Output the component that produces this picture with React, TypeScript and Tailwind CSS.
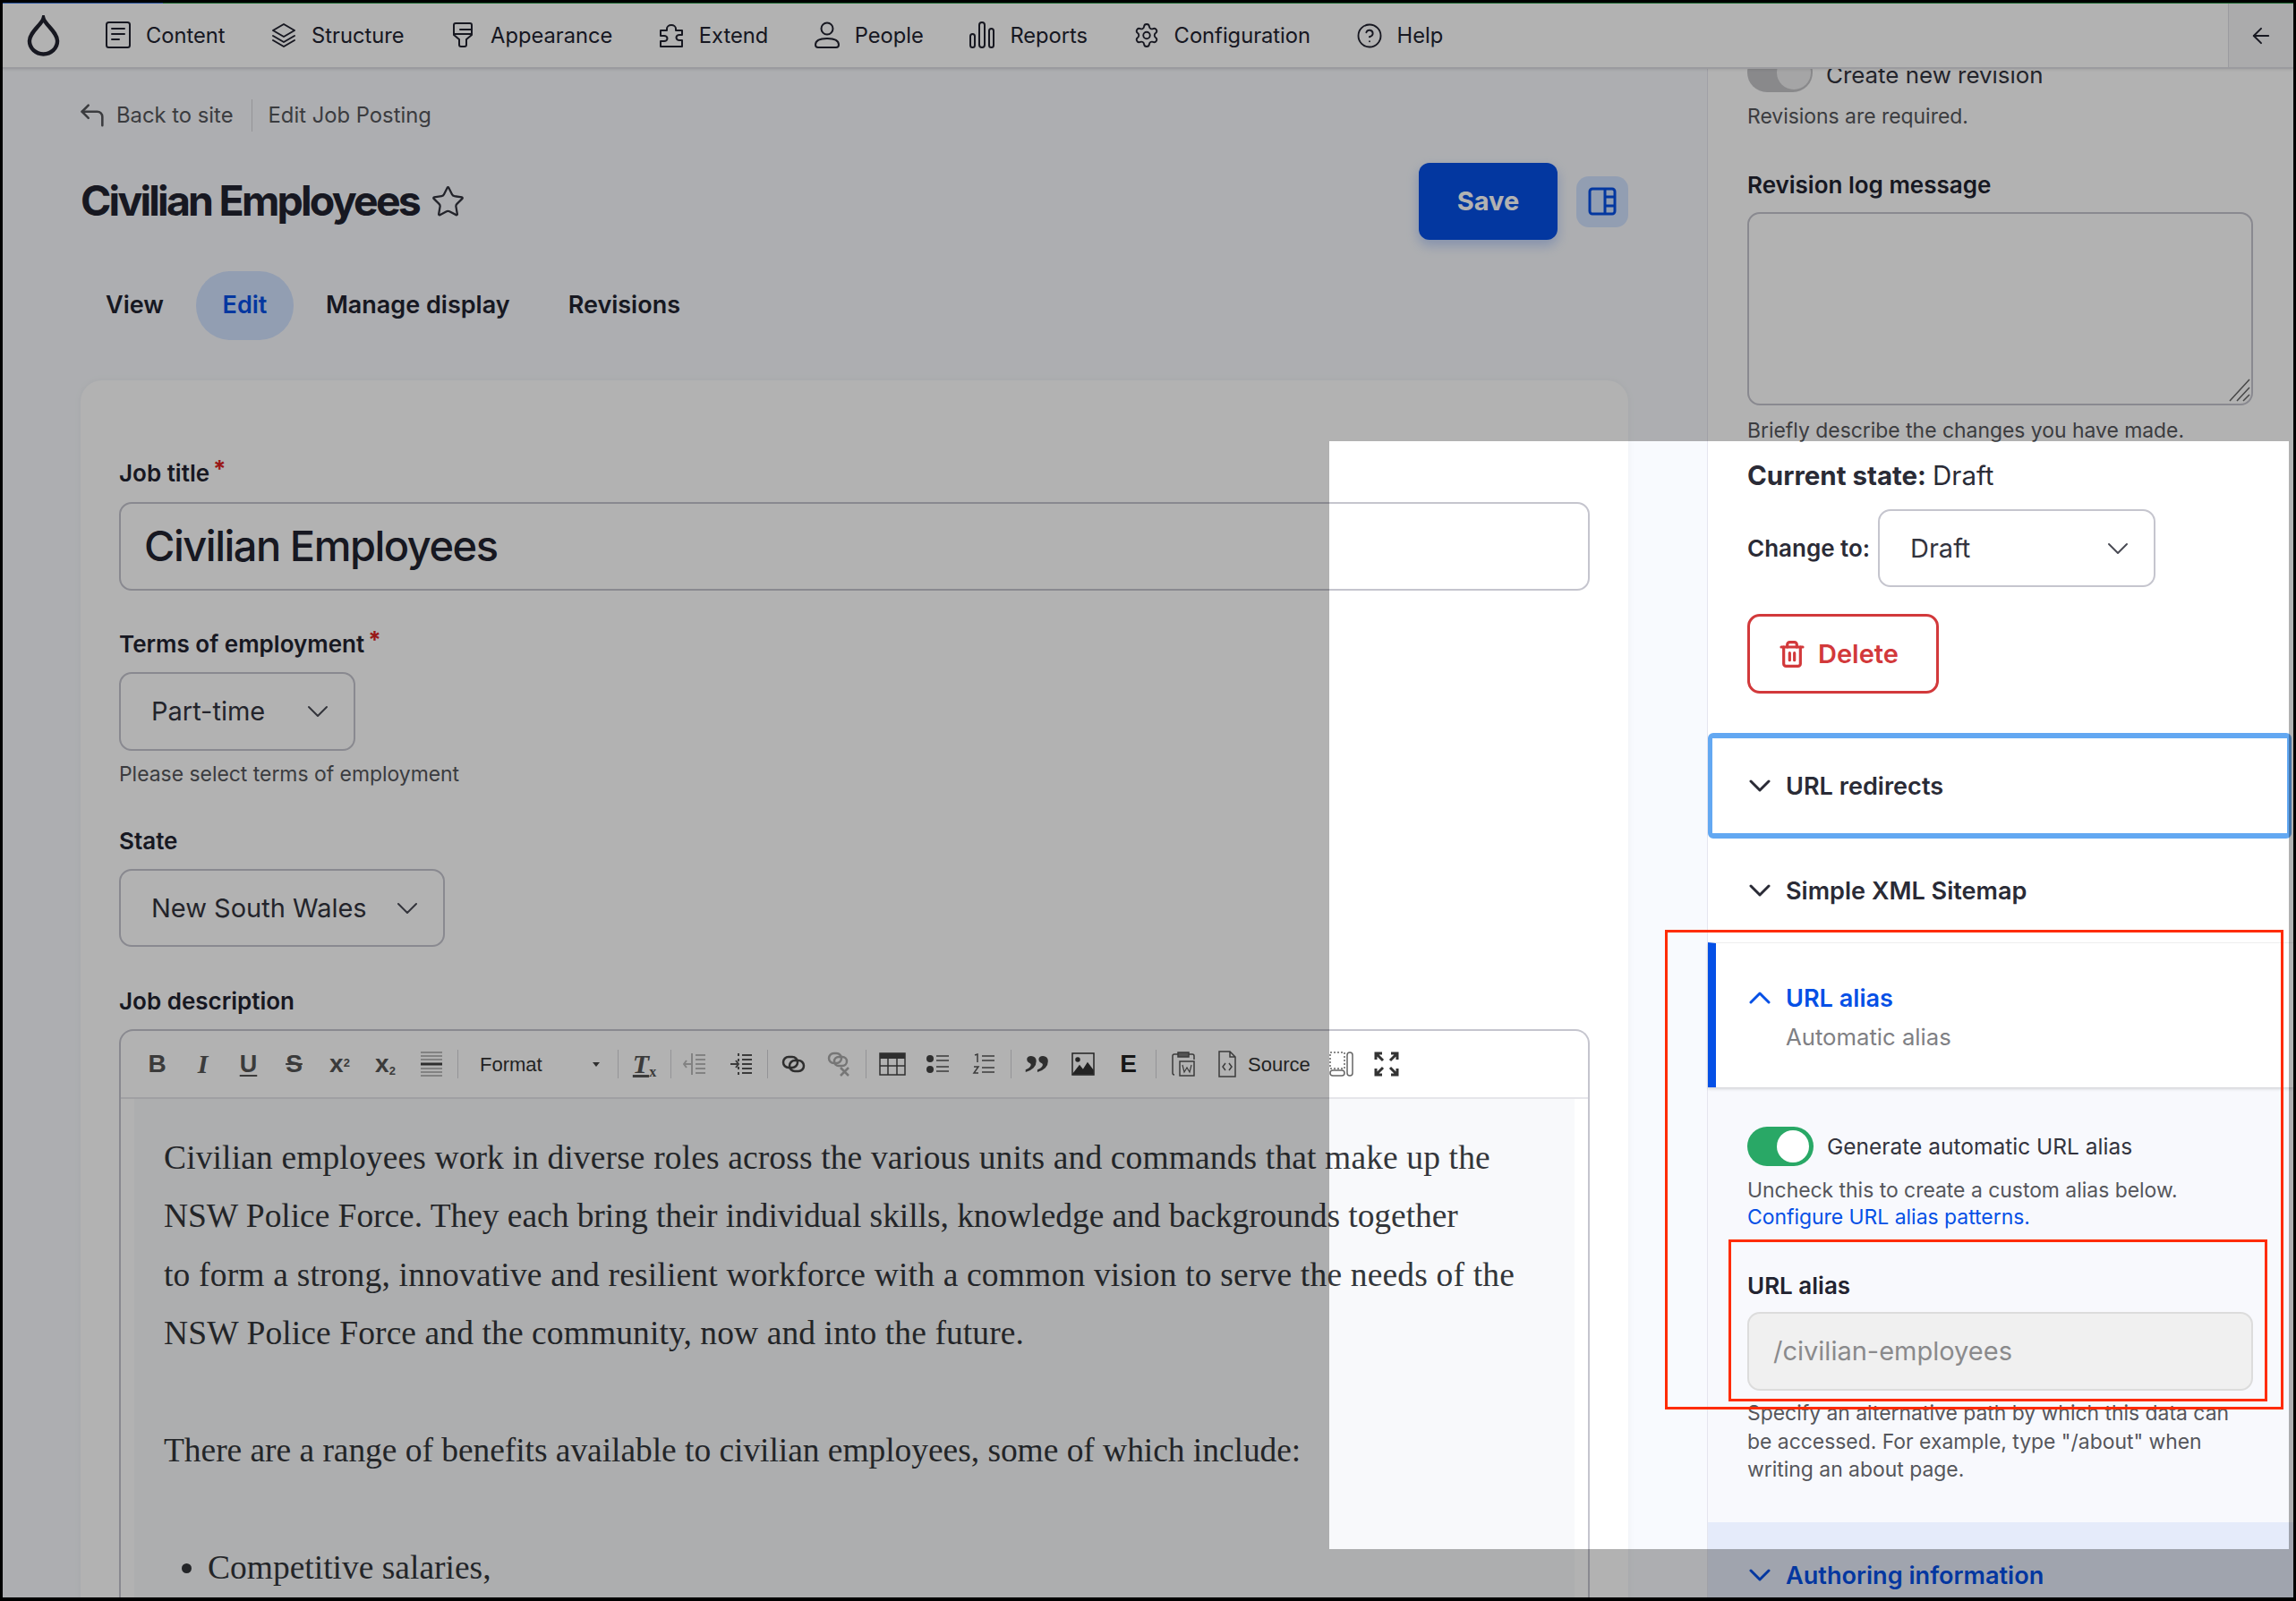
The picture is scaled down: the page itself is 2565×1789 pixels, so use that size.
import React from 'react';
import { ArrowLeft, CircleHelp, CornerUpLeft, Settings, Star, Trash2 } from 'lucide-react';

const Icon = ({ children, w = 30, h = 30, sw = 2 }: { children: React.ReactNode; w?: number; h?: number; sw?: number }) => (
  <svg width={w} height={h} viewBox={`0 0 ${w} ${h}`} fill="none" stroke="currentColor" strokeWidth={sw} strokeLinecap="round" strokeLinejoin="round">
    {children}
  </svg>
);

const navItems: { label: string; icon: React.ReactNode }[] = [
  {
    label: 'Content',
    icon: (
      <Icon>
        <rect x="2" y="1" width="26" height="28" rx="2.5" />
        <path d="M8 8h14M8 14h14M8 20h8" />
      </Icon>
    ),
  },
  {
    label: 'Structure',
    icon: (
      <Icon>
        <path d="M15 3 27 10 15 17 3 10Z" />
        <path d="M3 16l12 7 12-7M3 21l12 7 12-7" />
      </Icon>
    ),
  },
  {
    label: 'Appearance',
    icon: (
      <Icon>
        <path d="M7 2h16a2 2 0 0 1 2 2v11l-6 5v6a2 2 0 0 1-2 2h-4a2 2 0 0 1-2-2v-6l-6-5V4a2 2 0 0 1 2-2z" />
        <path d="M25 9H12M25 14H5" />
      </Icon>
    ),
  },
  {
    label: 'Extend',
    icon: (
      <Icon>
        <path d="M3 10h7V8a5 4 0 1 1 10 0v2h7v5h-3a3.5 3 0 0 0 0 6h3v7H3v-6h4a3.5 3 0 0 0 0-6H3Z" />
      </Icon>
    ),
  },
  {
    label: 'People',
    icon: (
      <Icon>
        <circle cx="15" cy="8" r="6.5" />
        <path d="M2 26c0-5 5-7 13-7s13 2 13 7c0 2-1 3-3 3H5c-2 0-3-1-3-3z" />
      </Icon>
    ),
  },
  {
    label: 'Reports',
    icon: (
      <Icon>
        <rect x="2" y="14" width="5" height="15" rx="2.5" />
        <rect x="12" y="1" width="6" height="28" rx="3" />
        <rect x="23" y="8" width="5" height="21" rx="2.5" />
      </Icon>
    ),
  },
  { label: 'Configuration', icon: <Settings size={35} strokeWidth={1.5} /> },
  { label: 'Help', icon: <CircleHelp size={36} strokeWidth={1.5} /> },
];

const Toolbar = () => (
  <div className="relative z-10 flex h-[73px] shrink-0 items-center border-b-2 border-[#dfdfe4] bg-white text-[#222330] shadow-[0_1px_3px_rgba(0,0,0,0.1)]">
    <div className="ml-[27px] mr-[50px] flex w-[37px] shrink-0 justify-center">
      <svg width="38" height="46" viewBox="0 0 38 46" fill="none" stroke="currentColor" strokeWidth="4.5">
        <path d="M19 3C21 10 35 19 35 29a16 15 0 0 1-32 0C3 19 17 10 19 3Z" />
      </svg>
    </div>
    <div className="flex items-center gap-[50.5px]">
      {navItems.map(({ label, icon }) => (
        <div key={label} className="flex items-center gap-[16px] text-[23.7px]">
          <span className="flex w-[30px] justify-center">{icon}</span>
          <span>{label}</span>
        </div>
      ))}
    </div>
    <div className="ml-auto flex h-full w-[73px] items-center justify-center border-l border-[#dedee6] bg-[#f5f5f7]">
      <ArrowLeft size={28} strokeWidth={1.7} />
    </div>
  </div>
);

const Chev = () => (
  <svg width="24" height="14" viewBox="0 0 24 14" fill="none" stroke="#4a4b55" strokeWidth="2" strokeLinecap="round" strokeLinejoin="round">
    <path d="M2 2l10 10L22 2" />
  </svg>
);

const Select = ({ value, className }: { value: string; className: string }) => (
  <div className={`flex items-center justify-between rounded-[14px] border-2 border-[#c5c5ce] bg-white pl-[34px] text-[29px] text-[#33343e] ${className}`}>
    <span>{value}</span>
    <Chev />
  </div>
);

const Label = ({ children, required }: { children: React.ReactNode; required?: boolean }) => (
  <div className="flex h-[30px] items-center pb-[2px] text-[26px] font-semibold text-[#222330]">
    {children}
    {required && <span className="mb-[8px] ml-[4px] text-[26px] font-bold leading-none text-[#dc2323]">*</span>}
  </div>
);

const Help = ({ children, className = '' }: { children: React.ReactNode; className?: string }) => (
  <div className={`text-[22.9px] leading-[30px] text-[#55565b] ${className}`}>{children}</div>
);

const Sep = () => <span className="h-[32px] w-[1px] shrink-0 bg-[#d4d4d8]" />;

const Btn = ({ children, className = 'w-[51px]' }: { children: React.ReactNode; className?: string }) => (
  <span className={`flex shrink-0 items-center justify-center text-[#555] ${className}`}>{children}</span>
);

const EditorToolbar = () => (
  <div className="flex h-[76px] items-center border-b-2 border-[#e6e6ea] pl-[15px] font-['Liberation_Sans',sans-serif]">
    <div className="flex w-[361px] pr-[4px]">
      <Btn><b className="text-[28px] leading-none text-[#555]">B</b></Btn>
      <Btn><i className="font-['Liberation_Serif',serif] text-[30px] font-bold leading-none">I</i></Btn>
      <Btn><span className="text-[27px] font-bold leading-none underline underline-offset-[3px]">U</span></Btn>
      <Btn><span className="text-[28px] font-bold leading-none line-through">S</span></Btn>
      <Btn><span className="text-[28px] font-bold leading-none">x<sup className="text-[13px]">2</sup></span></Btn>
      <Btn><span className="text-[28px] font-bold leading-none">x<sub className="text-[13px]">2</sub></span></Btn>
      <Btn>
        <svg width="26" height="30" viewBox="0 0 26 30" stroke="#777" strokeWidth="1">
          <path d="M1 2h24M1 6h24M1 10h24M1 20h24M1 24h24M1 28h24" />
          <path d="M1 15h24" stroke="#444" strokeWidth="3" />
        </svg>
      </Btn>
    </div>
    <Sep />
    <div className="flex w-[178px] items-center pl-[24px] pr-[20px] text-[22px] text-[#333]">
      <span>Format</span>
      <span className="ml-auto h-0 w-0 border-x-[4px] border-t-[5px] border-x-transparent border-t-[#444]" />
    </div>
    <Sep />
    <Btn className="w-[58px]">
      <span className="font-['Liberation_Serif',serif] text-[30px] font-bold italic leading-none underline">T<sub className="text-[16px] not-italic">x</sub></span>
    </Btn>
    <Sep />
    <div className="flex w-[107px] pr-[4px]">
      <Btn className="w-[52px]">
        <svg width="26" height="26" viewBox="0 0 26 26" stroke="#bbb" strokeWidth="2" fill="none">
          <path d="M14 3h11M14 8h11M14 13h11M14 18h11M14 23h11M10 1v24" />
          <path d="M9 13H1M4 9l-3 4 3 4" />
        </svg>
      </Btn>
      <Btn className="w-[52px]">
        <svg width="26" height="26" viewBox="0 0 26 26" stroke="#555" strokeWidth="2" fill="none">
          <path d="M14 3h11M14 8h11M14 13h11M14 18h11M14 23h11M10 1v3M10 7v3M10 16v3M10 22v3" />
          <path d="M1 13h9M7 9l3 4-3 4" />
        </svg>
      </Btn>
    </div>
    <Sep />
    <div className="flex w-[109px] pl-[3px] pr-[5px]">
      <Btn>
        <svg width="27" height="20" viewBox="0 0 27 20" stroke="#444" strokeWidth="2.5" fill="none">
          <rect x="2" y="2" width="16" height="12" rx="6" />
          <rect x="9" y="6" width="16" height="12" rx="6" />
        </svg>
      </Btn>
      <Btn>
        <svg width="27" height="28" viewBox="0 0 27 28" stroke="#aaa" strokeWidth="2.5" fill="none">
          <rect x="2" y="2" width="14" height="11" rx="5.5" />
          <rect x="8" y="6" width="14" height="10" rx="5" />
          <path d="M15 18l9 9M24 18l-9 9" />
        </svg>
      </Btn>
    </div>
    <Sep />
    <div className="flex w-[161px] pl-[3px]">
      <Btn>
        <svg width="30" height="26" viewBox="0 0 30 26" stroke="#444" strokeWidth="1.5" fill="none">
          <rect x="1" y="1" width="28" height="24" />
          <path d="M1 4h28" strokeWidth="6" />
          <path d="M1 15h28M10 7v18M20 7v18" />
        </svg>
      </Btn>
      <Btn>
        <svg width="26" height="24" viewBox="0 0 26 24" fill="none">
          <circle cx="4" cy="6" r="4" fill="#444" />
          <circle cx="4" cy="18" r="4" fill="#444" />
          <path d="M11 3h14M11 8h14M11 15h14M11 20h14" stroke="#555" strokeWidth="1.5" />
        </svg>
      </Btn>
      <Btn>
        <svg width="26" height="26" viewBox="0 0 26 26" fill="none" stroke="#555" strokeWidth="1.5">
          <path d="M3 3l3-1v9M2 16h5l-5 7h5M11 4h14M11 9h14M11 17h14M11 22h14" />
        </svg>
      </Btn>
    </div>
    <Sep />
    <div className="flex w-[161px] pl-[3px]">
      <Btn><span className="mt-[20px] font-['Liberation_Serif',serif] text-[60px] font-bold leading-none text-[#444]">”</span></Btn>
      <Btn>
        <svg width="26" height="26" viewBox="0 0 26 26" fill="#333" stroke="#333" strokeWidth="1.5">
          <rect x="1" y="1" width="24" height="24" fill="none" />
          <circle cx="7" cy="8" r="2" />
          <path d="M2 24l7-9 4 5 5-8 6 8v4z" />
        </svg>
      </Btn>
      <Btn><b className="text-[28px] leading-none text-[#222]">E</b></Btn>
    </div>
    <Sep />
    <Btn className="w-[59px]">
      <svg width="26" height="28" viewBox="0 0 26 28" fill="none" stroke="#555" strokeWidth="1.5">
        <path d="M7 3H3a2 2 0 0 0-2 2v19a2 2 0 0 0 2 2M19 3h4a2 2 0 0 1 2 2v4" />
        <path d="M7 1h12v5H7z" fill="#777" />
        <rect x="9" y="11" width="16" height="16" />
        <path d="M12 15l2 8 3-5 3 5 2-8" strokeWidth="1.2" />
      </svg>
    </Btn>
    <div className="ml-[10px] flex w-[122px] items-center gap-[13px] text-[22px] text-[#333]">
      <svg className="shrink-0" width="20" height="30" viewBox="0 0 20 30" fill="none" stroke="#555" strokeWidth="1.5">
        <path d="M1 1h12l6 6v22H1zM13 1v6h6" />
        <path d="M8 14l-3 4 3 4M12 14l3 4-3 4" />
      </svg>
      <span>Source</span>
    </div>
    <Btn className="ml-[2px] w-[28px]">
      <svg width="28" height="28" viewBox="0 0 28 28" fill="none" stroke="#666" strokeWidth="1.5">
        <rect x="1" y="1" width="16" height="18" strokeDasharray="2 2" />
        <rect x="20" y="1" width="6" height="26" rx="3" />
        <rect x="1" y="21" width="16" height="6" rx="3" />
      </svg>
    </Btn>
    <Btn className="ml-[22px] w-[28px]">
      <svg width="28" height="28" viewBox="0 0 28 28" fill="none" stroke="#333" strokeWidth="3">
        <path d="M2 9V2h7M19 2h7v7M2 19v7h7M19 26h7v-7M3 3l7 7M25 3l-7 7M3 25l7-7M25 25l-7-7" />
      </svg>
    </Btn>
  </div>
);

const Editor = () => (
  <div className="mt-[16px] h-[700px] rounded-t-[16px] border-x-2 border-t-2 border-[#c5c5ce]">
    <EditorToolbar />
    <div className="mx-[15px] h-full bg-[#f8f9fb] pl-[33px] pt-[33px] font-['Liberation_Serif',serif] text-[37.5px] leading-[65.4px] text-[#33363a]">
      <p className="whitespace-nowrap">
        <span className="block tracking-[0.13px]">Civilian employees work in diverse roles across the various units and commands that make up the</span>
        <span className="block tracking-[-0.05px]">NSW Police Force. They each bring their individual skills, knowledge and backgrounds together</span>
        <span className="block tracking-[0.18px]">to form a strong, innovative and resilient workforce with a common vision to serve the needs of the</span>
        <span className="block tracking-[0.1px]">NSW Police Force and the community, now and into the future.</span>
      </p>
      <p className="mt-[65.4px] whitespace-nowrap tracking-[-0.05px]">There are a range of benefits available to civilian employees, some of which include:</p>
      <ul className="mt-[65.4px] list-disc pl-[49px]">
        <li>Competitive salaries,</li>
      </ul>
    </div>
  </div>
);

const Main = () => (
  <div className="h-full w-[1904px] shrink-0 overflow-hidden pl-[87px] pr-[88px] pt-[34px]">
    <div className="flex h-[36px] items-center text-[23.8px] text-[#55565b]">
      <CornerUpLeft size={34} strokeWidth={1.8} className="-ml-[4px] mr-[10px]" />
      <span>Back to site</span>
      <span className="ml-[20px] mr-[18px] h-full w-[1px] bg-[#d4d4d8]" />
      <span>Edit Job Posting</span>
    </div>
    <div className="mt-[35px] flex h-[86px] items-center">
      <h1 className="text-[46.5px] font-bold tracking-[-2.8px] text-[#222330]">Civilian Employees</h1>
      <Star size={39} strokeWidth={1.4} className="ml-[13px] text-[#33343e]" />
      <button className="ml-auto h-full w-[155px] rounded-[12px] bg-[#0550e6] text-[29px] font-bold text-white shadow-[0_6px_14px_rgba(5,80,230,0.25)]">Save</button>
      <div className="ml-[21px] flex h-[57px] w-[58px] items-center justify-center rounded-[14px] bg-[#d2e2ff] text-[#0550e6]">
        <svg width="32" height="32" viewBox="0 0 32 32" fill="none" stroke="currentColor" strokeWidth="3">
          <rect x="2" y="2" width="28" height="28" rx="3" />
          <path d="M19 2v28M19 11h11M19 21h11" />
        </svg>
      </div>
    </div>
    <div className="mt-[35px] flex h-[77px] items-center text-[27px] font-semibold text-[#222330]">
      <span className="ml-[28px]">View</span>
      <span className="ml-[36px] flex h-full w-[109px] items-center justify-center rounded-[38px] bg-[#d2e2ff] text-[#0550e6]">Edit</span>
      <span className="ml-[36px]">Manage display</span>
      <span className="ml-[65px]">Revisions</span>
    </div>
    <div className="mt-[45px] h-[1400px] rounded-t-[24px] bg-white px-[43px] pt-[89px] shadow-[0_0_8px_rgba(0,0,0,0.05)]">
      <Label required>Job title</Label>
      <div className="mt-[17px] flex h-[99px] items-center rounded-[14px] border-2 border-[#c5c5ce] pl-[26px] text-[47px] font-medium tracking-[-1.5px] text-[#222330]">
        Civilian Employees
      </div>
      <div className="mt-[45px]"><Label required>Terms of employment</Label></div>
      <Select value="Part-time" className="mt-[16px] h-[88px] w-[264px] pr-[28px]" />
      <Help className="mt-[11px]">Please select terms of employment</Help>
      <div className="mt-[45px]"><Label>State</Label></div>
      <Select value="New South Wales" className="mt-[16px] h-[87px] w-[364px] pr-[28px]" />
      <div className="mt-[46px]"><Label>Job description</Label></div>
      <Editor />
    </div>
  </div>
);

const AccordionRow = ({ label, blue, open }: { label: string; blue?: boolean; open?: boolean }) => (
  <div className={`flex items-center gap-[17px] text-[27.1px] font-semibold ${blue ? 'text-[#0550e6]' : 'text-[#2a2b36]'}`}>
    <svg className={open ? 'rotate-180' : ''} width="24" height="14" viewBox="0 0 24 14" fill="none" stroke="currentColor" strokeWidth="3" strokeLinecap="round" strokeLinejoin="round">
      <path d="M2 2l10 10L22 2" />
    </svg>
    <span className="mt-[2px]">{label}</span>
  </div>
);

const Sidebar = () => (
  <div className="h-[1780px] flex-1 border-l border-[#e5e5ef] bg-white">
    <div className="-mt-[18px] px-[44px]">
      <div className="flex h-[44px] items-center gap-[15px] text-[25.9px] text-[#33343e]">
        <span className="flex h-full w-[73px] items-center justify-end rounded-full bg-[#c5c5c8] pr-[2px]">
          <span className="h-[38px] w-[38px] rounded-full bg-[#ededee]" />
        </span>
        <span className="mt-[6px]">Create new revision</span>
      </div>
      <Help className="mt-[12px]">Revisions are required.</Help>
      <div className="mt-[47px]"><Label>Revision log message</Label></div>
      <div className="relative mt-[15px] h-[216px] w-[565px] rounded-[14px] border-2 border-[#c5c5ce]">
        <svg className="absolute bottom-[2px] right-[1px]" width="24" height="26" viewBox="0 0 24 26" stroke="#666" strokeWidth="1.5">
          <path d="M1 25 23 1M9 25 23 10M16 25l7-7" />
        </svg>
      </div>
      <Help className="mt-[13px]">Briefly describe the changes you have made.</Help>
      <div className="mt-[17px] flex h-[36px] items-center text-[29.5px] text-[#2a2b36]">
        <b className="mr-[7px] font-bold">Current state:</b> Draft
      </div>
      <div className="mt-[20px] flex items-center">
        <span className="w-[146px] text-[26px] font-semibold text-[#2a2b36]">Change to:</span>
        <Select value="Draft" className="h-[87px] w-[310px] pr-[28px]" />
      </div>
      <button className="mt-[30px] flex h-[89px] w-[214px] items-center rounded-[14px] border-[3px] border-[#d2393b] pl-[31px] text-[29px] font-semibold text-[#d2393b]">
        <Trash2 size={32} strokeWidth={2.4} />
        <span className="ml-[13px]">Delete</span>
      </button>
    </div>
    <div className="mr-[2px] mt-[44px] flex h-[118px] items-center rounded-[6px] border-x-[5px] border-y-[6px] border-[#63a8f2] pl-[41px]">
      <AccordionRow label="URL redirects" />
    </div>
    <div className="flex h-[116px] items-center pl-[46px]">
      <AccordionRow label="Simple XML Sitemap" />
    </div>
    <div className="relative h-[162px] border-l-[9px] border-t border-[#0550e6] border-t-[#eeeeee] pl-[37px] pt-[40px] shadow-[0_2px_3px_rgba(0,0,0,0.15)]">
      <AccordionRow label="URL alias" blue open />
      <div className="ml-[41px] mt-[3px] text-[25.7px] text-[#7f8084]">Automatic alias</div>
    </div>
    <div className="h-[486px] bg-[#f8f9fd] px-[44px] pt-[44px]">
      <div className="flex h-[44px] items-center gap-[15px] text-[24.5px] text-[#33343e]">
        <span className="flex h-full w-[74px] items-center justify-end rounded-full bg-[#29a866] pr-[5px]">
          <span className="h-[36px] w-[36px] rounded-full bg-white" />
        </span>
        <span>Generate automatic URL alias</span>
      </div>
      <Help className="mt-[12px]">
        Uncheck this to create a custom alias below.
        <br />
        <span className="text-[#0550e6]">Configure URL alias patterns.</span>
      </Help>
      <div className="mt-[47px]"><Label>URL alias</Label></div>
      <div className="mt-[14px] flex h-[88px] w-[565px] items-center rounded-[14px] border-2 border-[#dcdcdc] bg-[#f0f0f0] pl-[27px] text-[29px] text-[#8a8a8c]">
        /civilian-employees
      </div>
      <Help className="mt-[10px] w-[565px] leading-[31.5px]">
        Specify an alternative path by which this data can
        <br />
        be accessed. For example, type "/about" when
        <br />
        writing an about page.
      </Help>
    </div>
    <div className="flex h-[118px] items-center bg-[#e5ebfa] pl-[46px]">
      <AccordionRow label="Authoring information" blue />
    </div>
  </div>
);

export default function App() {
  return (
    <div className="h-[1789px] w-[2565px] overflow-hidden bg-black pb-[4px] pl-[3px] pr-[3px] pt-[3px] font-['Inter',sans-serif]">
      <div className="relative flex h-full flex-col overflow-hidden bg-[#f8fafe]">
        <div className="h-[1px] shrink-0 bg-gradient-to-r from-[#3f7fe8] from-[7%] to-[#2f9e4f] to-[7%]" />
        <Toolbar />
        <div className="flex min-h-0 flex-1 overflow-hidden">
          <Main />
          <Sidebar />
        </div>
        {/* dim everything but the highlighted window */}
        <div className="pointer-events-none absolute left-[1482px] top-[490px] z-20 h-[1238px] w-[1072px] shadow-[0_0_0_3000px_rgba(0,0,0,0.3)]" />
        {/* annotation boxes */}
        <div className="pointer-events-none absolute left-[1857px] top-[1036px] z-30 h-[536px] w-[691px] border-[3px] border-[#ff2c00]" />
        <div className="pointer-events-none absolute left-[1928px] top-[1382px] z-30 h-[181px] w-[602px] border-[3px] border-[#ff2c00]" />
      </div>
    </div>
  );
}
